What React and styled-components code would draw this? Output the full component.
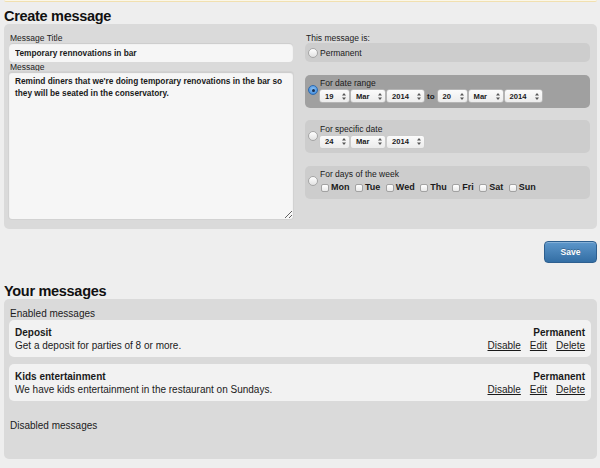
import React from 'react';
import styled, { createGlobalStyle } from 'styled-components';

const Global = createGlobalStyle`
  html, body { margin: 0; padding: 0; }
  body {
    background: #eeeeee;
    font-family: "Liberation Sans", Arial, Helvetica, sans-serif;
    color: #1a1a1a;
  }
`;

const Page = styled.div`
  width: 600px;
  height: 468px;
  overflow: hidden;
  padding: 0 3px 0 4px;
  box-sizing: border-box;
`;

const Notice = styled.div`
  height: 1px;
  background: #fbf7e8;
  border-bottom: 1px solid #f1e0b0;
  border-radius: 0 0 3px 3px;
`;

const Heading = styled.h2`
  margin: 0;
  font-size: 14.5px;
  letter-spacing: -0.3px;
  font-weight: bold;
  line-height: 16px;
  color: #111;
  padding-top: ${p => p.$top || 0}px;
`;

const Panel = styled.div`
  background: #dadada;
  border-radius: 5px;
`;

const CreateGrid = styled(Panel)`
  display: grid;
  grid-template-columns: 284px 285px;
  column-gap: 12px;
  padding: 9px 7px 10px 5px;
`;

const Column = styled.div`
  display: flex;
  flex-direction: column;
`;

const Label = styled.div`
  font-size: 8.5px;
  line-height: 10px;
  color: #222;
  padding-left: 1px;
`;

const TitleInput = styled.input`
  box-sizing: border-box;
  height: 19px;
  width: 100%;
  border: none;
  border-radius: 4px;
  background: #f6f6f6;
  box-shadow: inset 0 1px 1px rgba(0,0,0,0.18);
  font: bold 8.3px "Liberation Sans", Arial, sans-serif;
  color: #1a1a1a;
  padding: 0 6px;
  margin: 0;
  outline: none;
`;

const MessageArea = styled.textarea`
  box-sizing: border-box;
  height: 147px;
  width: 100%;
  border: none;
  border-radius: 3px;
  background: #f6f6f6;
  box-shadow: inset 0 1px 1px rgba(0,0,0,0.18), 0 0 0 1px #d2d2d2;
  font: bold 8.3px/12px "Liberation Sans", Arial, sans-serif;
  color: #1a1a1a;
  padding: 3px 6px;
  margin: 0;
  outline: none;
`;

const Options = styled.div`
  display: flex;
  flex-direction: column;
  gap: 12.5px;
`;

const Option = styled.div`
  display: flex;
  align-items: center;
  gap: 2px;
  height: ${p => (p.$compact ? 19 : 33)}px;
  box-sizing: border-box;
  padding: ${p => (p.$compact ? '0 4px 0 3px' : '3px 4px 5px 3px')};
  border-radius: 5px;
  background: ${p => (p.$active ? '#a0a0a0' : '#cdcdcd')};
`;

const Radio = styled.span`
  flex: none;
  width: 10px;
  height: 10px;
  border-radius: 50%;
  box-sizing: border-box;
  position: relative;
  background: ${p => (p.$checked
    ? 'radial-gradient(circle at 50% 40%, #8fc3f5, #2f7fd6)'
    : 'linear-gradient(#ffffff, #e2e2e2)')};
  border: 1px solid ${p => (p.$checked ? '#2e6bb0' : '#a6a6a6')};
  &::after {
    content: '';
    display: ${p => (p.$checked ? 'block' : 'none')};
    position: absolute;
    left: 2.5px;
    top: 2.5px;
    width: 3px;
    height: 3px;
    border-radius: 50%;
    background: #1b2f4e;
  }
`;

const OptionText = styled.span`
  font-size: 8.5px;
  line-height: 10px;
  color: #1a1a1a;
`;

const OptionBody = styled.div`
  display: flex;
  flex-direction: column;
  gap: 2px;
`;

const DateRow = styled.div`
  display: flex;
  align-items: center;
  gap: 2px;
`;

const SelectBox = styled.span`
  display: inline-flex;
  align-items: center;
  justify-content: space-between;
  box-sizing: border-box;
  width: ${p => p.$w}px;
  height: 12px;
  padding: 0 3px 0 5px;
  border-radius: 2px;
  background: linear-gradient(#fbfbfb, #ececec);
  box-shadow: 0 0 0 0.5px #c9c9c9;
  font: bold 7.6px "Liberation Sans", Arial, sans-serif;
  color: #1a1a1a;
`;

const To = styled.span`
  font: bold 8px "Liberation Sans", Arial, sans-serif;
  color: #1a1a1a;
  margin: 0 1px 0 1px;
`;

const Arrows = () => (
  <svg width="4" height="7" viewBox="0 0 4 7">
    <path d="M2 0 L4 2.6 L0 2.6 Z M0 4.4 L4 4.4 L2 7 Z" fill="#555" />
  </svg>
);

const Select = ({ w, children }) => (
  <SelectBox $w={w}>
    <span>{children}</span>
    <Arrows />
  </SelectBox>
);

const DateSelects = ({ day }) => (
  <>
    <Select w={29}>{day}</Select>
    <Select w={34}>Mar</Select>
    <Select w={37}>2014</Select>
  </>
);

const Days = styled.div`
  display: flex;
  align-items: flex-end;
  gap: 5.5px;
  padding-top: 1px;
  padding-left: 1px;
`;

const Day = styled.label`
  display: flex;
  align-items: flex-end;
  gap: 2px;
  font: bold 9px/11px "Liberation Sans", Arial, sans-serif;
  color: #1a1a1a;
`;

const Check = styled.span`
  width: 8px;
  height: 8px;
  box-sizing: border-box;
  border: 1px solid #a2a2a2;
  border-radius: 2px;
  background: linear-gradient(#fff, #e8e8e8);
  margin-bottom: 1px;
`;

const Actions = styled.div`
  display: flex;
  justify-content: flex-end;
  padding: 12px 0 0;
`;

const SaveButton = styled.button`
  width: 53px;
  height: 22px;
  border: 1px solid #2d5f8f;
  border-radius: 4px;
  background: linear-gradient(#5d97cb, #336ea4);
  color: #fff;
  font: bold 8.5px "Liberation Sans", Arial, sans-serif;
  text-shadow: 0 -1px 0 rgba(0,0,0,0.25);
  box-shadow: inset 0 1px 0 rgba(255,255,255,0.25);
  padding: 0;
  cursor: pointer;
`;

const MessagesPanel = styled(Panel)`
  padding: 9px 6px 28px 5px;
  display: flex;
  flex-direction: column;
`;

const GroupTitle = styled.div`
  font-size: 10px;
  line-height: 11px;
  color: #1a1a1a;
  padding-left: 1px;
  margin: ${p => p.$m || '0'};
`;

const Cards = styled.div`
  display: flex;
  flex-direction: column;
  gap: 7px;
`;

const Card = styled.div`
  display: flex;
  justify-content: space-between;
  padding: 6px 6px 5px;
  border-radius: 5px;
  background: #f2f2f2;
  font-size: 10px;
  line-height: 13px;
  color: #1a1a1a;
`;

const CardSide = styled.div`
  display: flex;
  flex-direction: column;
  align-items: ${p => (p.$right ? 'flex-end' : 'flex-start')};
`;

const Strong = styled.span`
  font-weight: bold;
`;

const Links = styled.div`
  display: flex;
  gap: 9px;
`;

const LinkText = styled.a`
  color: #1a1a1a;
  text-decoration: underline;
  cursor: pointer;
`;

const messages = [
  { title: 'Deposit', text: 'Get a deposit for parties of 8 or more.', type: 'Permanent' },
  { title: 'Kids entertainment', text: 'We have kids entertainment in the restaurant on Sundays.', type: 'Permanent' },
];

const days = ['Mon', 'Tue', 'Wed', 'Thu', 'Fri', 'Sat', 'Sun'];

export default function App() {
  return (
    <Page>
      <Global />
      <Notice />
      <Heading $top={6}>Create message</Heading>
      <CreateGrid>
        <Column>
          <Label>Message Title</Label>
          <TitleInput readOnly defaultValue="Temporary rennovations in bar" />
          <Label>Message</Label>
          <MessageArea
            readOnly
            defaultValue="Remind diners that we're doing temporary renovations in the bar so they will be seated in the conservatory."
          />
        </Column>
        <Column>
          <Label>This message is:</Label>
          <Options>
            <Option $compact>
              <Radio />
              <OptionText>Permanent</OptionText>
            </Option>
            <Option $active>
              <Radio $checked />
              <OptionBody>
                <OptionText>For date range</OptionText>
                <DateRow>
                  <DateSelects day="19" />
                  <To>to</To>
                  <DateSelects day="20" />
                </DateRow>
              </OptionBody>
            </Option>
            <Option>
              <Radio />
              <OptionBody>
                <OptionText>For specific date</OptionText>
                <DateRow>
                  <DateSelects day="24" />
                </DateRow>
              </OptionBody>
            </Option>
            <Option>
              <Radio />
              <OptionBody>
                <OptionText>For days of the week</OptionText>
                <Days>
                  {days.map(d => (
                    <Day key={d}>
                      <Check />
                      {d}
                    </Day>
                  ))}
                </Days>
              </OptionBody>
            </Option>
          </Options>
        </Column>
      </CreateGrid>
      <Actions>
        <SaveButton>Save</SaveButton>
      </Actions>
      <Heading $top={20}>Your messages</Heading>
      <MessagesPanel>
        <GroupTitle $m="0 0 1px">Enabled messages</GroupTitle>
        <Cards>
          {messages.map(m => (
            <Card key={m.title}>
              <CardSide>
                <Strong>{m.title}</Strong>
                <span>{m.text}</span>
              </CardSide>
              <CardSide $right>
                <Strong>{m.type}</Strong>
                <Links>
                  <LinkText>Disable</LinkText>
                  <LinkText>Edit</LinkText>
                  <LinkText>Delete</LinkText>
                </Links>
              </CardSide>
            </Card>
          ))}
        </Cards>
        <GroupTitle $m="19px 0 0">Disabled messages</GroupTitle>
      </MessagesPanel>
    </Page>
  );
}
